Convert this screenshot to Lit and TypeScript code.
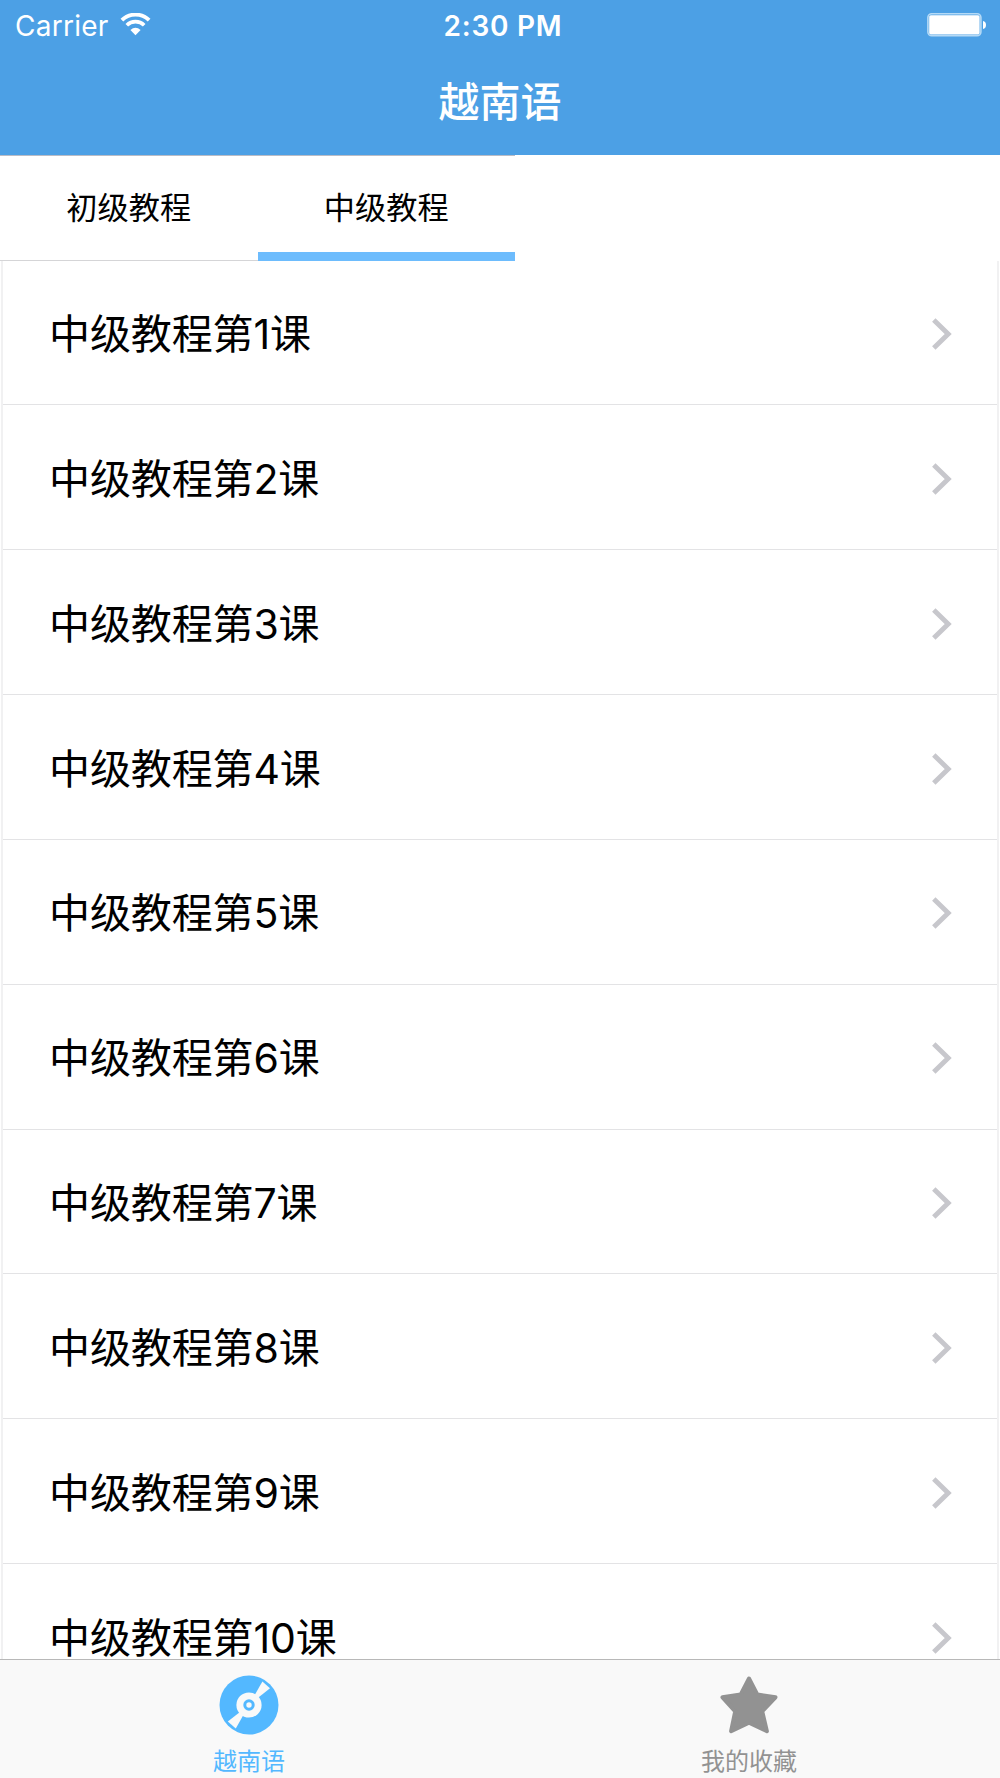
import { LitElement, html, css, svg } from "lit";
import { customElement, property } from "lit/decorators.js";

const FONT = css`Inter, "Noto Sans CJK SC", sans-serif`;

@customElement("status-bar")
class StatusBar extends LitElement {
  static styles = css`
    :host { display: grid; grid-template-columns: 1fr auto 1fr; align-items: center; height: 48px; padding: 4px 14px 0 15px; box-sizing: border-box; color: #fff; font-size: 28px; line-height: 44px; }
    .carrier { display: flex; align-items: center; gap: 11px; letter-spacing: 0.25px; }
    .carrier svg { display: block; margin-top: -4px; }
    .time { font-weight: 600; letter-spacing: 0.75px; padding-left: 5px; }
    .battery { justify-self: end; display: block; margin-top: -3px; }
  `;
  render() {
    return html`
      <div class="carrier">
        <span>Carrier</span>
        <svg width="31" height="23" viewBox="0 0 31 23" fill="none" stroke="#fff">
          <path d="M1.9 7.2 A19.3 19.3 0 0 1 29.1 7.2" stroke-width="3.9" />
          <path d="M6.8 12.2 A12.4 12.4 0 0 1 24.2 12.2" stroke-width="3.7" />
          <path d="M10.4 17 Q15.5 12.6 20.6 17 L15.5 22.2 Z" fill="#fff" stroke="none" />
        </svg>
      </div>
      <div class="time">2:30 PM</div>
      <svg class="battery" width="60" height="24" viewBox="0 0 60 24">
        <rect x="1.9" y="0.8" width="53" height="22" rx="3.8" fill="none" stroke="#b5daf6" stroke-width="1.6" />
        <rect x="3.2" y="2.2" width="50.4" height="19.2" rx="1.6" fill="#fff" />
        <path d="M57 8 Q60 8.4 60 12 Q60 15.6 57 16 Z" fill="#fff" />
      </svg>
    `;
  }
}

@customElement("lesson-row")
class LessonRow extends LitElement {
  @property() label = "";
  static styles = css`
    :host { display: flex; align-items: center; justify-content: space-between; flex: none; height: 144.85px; padding: 3px 45px 0 46px; box-sizing: border-box; border-bottom: 1px solid #e3e3e5; }
    .label { font-size: 41px; line-height: 40px; letter-spacing: -0.12px; color: #000; white-space: nowrap; }
    .chevron { display: block; }
  `;
  render() {
    return html`
      <span class="label">${this.label}</span>
      <svg class="chevron" width="20" height="32" viewBox="0 0 20 32">
        <path d="M1.8 2 L16.2 16 L1.8 30" fill="none" stroke="#c7c7cc" stroke-width="4.9" />
      </svg>
    `;
  }
}

const discIcon = svg`
  <circle cx="30" cy="30" r="29.5" fill="#53b8ff" />
  <path d="M30 30 L43.4 6.6 L51 13.2 Z" fill="#f9f9f9" />
  <path d="M30 30 L8.8 46.6 L16.8 53.4 Z" fill="#f9f9f9" />
  <circle cx="30" cy="30" r="12.6" fill="#f9f9f9" />
  <circle cx="30" cy="30" r="4.2" fill="none" stroke="#53b8ff" stroke-width="3" />
`;

const starIcon = svg`
  <path d="M30 3.5 L38.4 19.6 L56.5 22.3 L43.2 36.3 L47.9 56.2 L30 47.6 L12.1 56.2 L16.2 36.3 L3.5 22.3 L21.6 19.6 Z"
    fill="#929292" stroke="#929292" stroke-width="4" stroke-linejoin="round" />
`;

@customElement("app-root")
class AppRoot extends LitElement {
  static styles = css`
    :host { display: flex; flex-direction: column; width: 1000px; height: 1778px; overflow: hidden; background: #fff; font-family: ${FONT}; }
    .header { flex: none; height: 155px; background: #4ca0e5; color: #fff; }
    .title { margin: 0; padding-top: 24px; font-size: 41px; line-height: 60px; font-weight: 500; text-align: center; }
    .tabs { flex: none; display: flex; height: 106px; }
    .tab { width: 257.5px; box-sizing: border-box; border-top: 1px solid #b9bcc6; border-bottom: 1px solid #d5d5d7; font-size: 31.2px; line-height: 104px; text-align: center; color: #000; }
    .tab.active { border-bottom: 9px solid #6dbcfd; }
    .list { flex: 1; min-height: 0; display: flex; flex-direction: column; overflow: hidden; margin: 0 1px; border: solid #f1f1f2; border-width: 0 2px; }
    .list lesson-row:first-child { height: 144.4px; }
    .tabbar { flex: none; display: flex; height: 119px; box-sizing: border-box; border-top: 1px solid #b8b8b8; background: #f9f9f9; }
    .item { flex: 1; display: flex; flex-direction: column; align-items: center; padding: 15px 2px 0 0; font-size: 24px; line-height: 30px; color: #929292; }
    .item svg { display: block; margin-bottom: 12px; }
    .item.active { color: #53b8ff; }
  `;
  render() {
    return html`
      <header class="header">
        <status-bar></status-bar>
        <h1 class="title">越南语</h1>
      </header>
      <nav class="tabs">
        <div class="tab">初级教程</div>
        <div class="tab active">中级教程</div>
      </nav>
      <main class="list">
        ${Array.from({ length: 10 }, (_, i) => html`<lesson-row .label=${`中级教程第${i + 1}课`}></lesson-row>`)}
      </main>
      <footer class="tabbar">
        <div class="item active">
          <svg width="60" height="60" viewBox="0 0 60 60">${discIcon}</svg>
          <span>越南语</span>
        </div>
        <div class="item">
          <svg width="60" height="60" viewBox="0 0 60 60">${starIcon}</svg>
          <span>我的收藏</span>
        </div>
      </footer>
    `;
  }
}
